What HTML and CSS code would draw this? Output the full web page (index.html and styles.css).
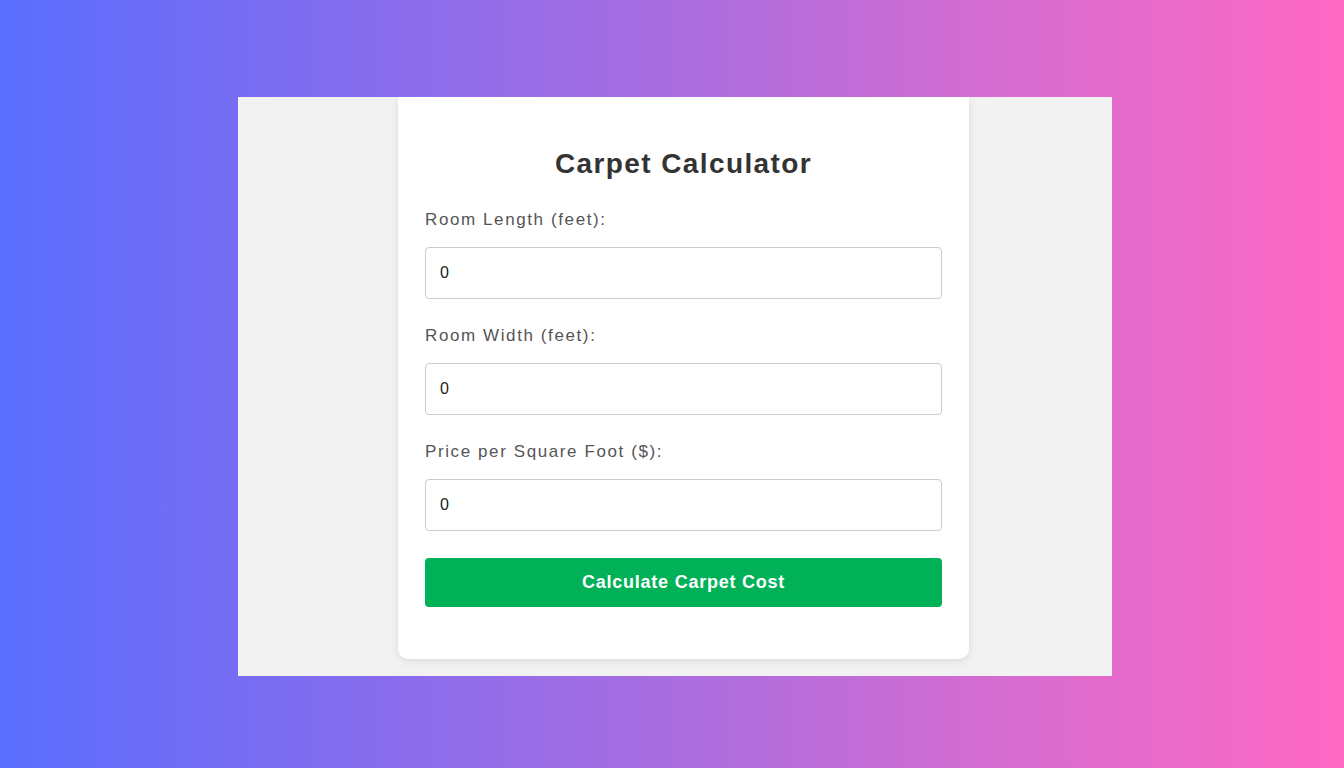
FILE: index.html
```html
<!DOCTYPE html>
<html lang="en">
<head>
<meta charset="utf-8">
<title>Carpet Calculator</title>
<link rel="stylesheet" href="styles.css">
</head>
<body>
<div class="stage">
  <div class="panel">
    <div class="card">
      <h1 class="title">Carpet Calculator</h1>
      <label class="label" for="len">Room Length (feet):</label>
      <input class="field" id="len" type="text" value="0">
      <label class="label" for="wid">Room Width (feet):</label>
      <input class="field" id="wid" type="text" value="0">
      <label class="label" for="price">Price per Square Foot ($):</label>
      <input class="field" id="price" type="text" value="0">
      <button class="btn" type="button">Calculate Carpet Cost</button>
    </div>
  </div>
</div>
</body>
</html>
```

FILE: styles.css
```css
* { box-sizing: border-box; }
html, body { margin: 0; padding: 0; }
body {
  width: 1344px;
  height: 768px;
  overflow: hidden;
  font-family: "Liberation Sans", Arial, sans-serif;
  background: linear-gradient(to right, #5a6eff 0%, #8a6cec 30%, #b26ddd 55%, #dc6ccf 78%, #ff68c3 100%);
}
.stage {
  padding-top: 97px;
  padding-left: 238px;
}
.panel {
  width: 874px;
  height: 579px;
  background: #f2f2f2;
  padding-left: 160px;
  overflow: hidden;
}
.card {
  width: 571px;
  height: 562px;
  background: #fff;
  border-radius: 0 0 10px 10px;
  box-shadow: 0 2px 8px rgba(0, 0, 0, 0.1);
  padding: 51px 27px 0 27px;
  display: flex;
  flex-direction: column;
}
.title {
  margin: 0 0 30px 0;
  font-size: 28px;
  line-height: 32px;
  font-weight: bold;
  letter-spacing: 1.4px;
  color: #333;
  text-align: center;
}
.label {
  display: block;
  font-size: 17px;
  line-height: 20px;
  letter-spacing: 1.6px;
  color: #555;
  margin-bottom: 17px;
}
.field {
  display: block;
  width: 100%;
  height: 52px;
  border: 1px solid #ccc;
  border-radius: 4px;
  padding: 0 14px;
  font-family: "Liberation Sans", Arial, sans-serif;
  font-size: 16px;
  color: #222;
  background: #fff;
  margin-bottom: 27px;
}
.btn {
  display: block;
  width: 100%;
  height: 49px;
  border: none;
  border-radius: 4px;
  background: #00b158;
  color: #fff;
  font-family: "Liberation Sans", Arial, sans-serif;
  font-size: 18px;
  font-weight: bold;
  letter-spacing: 0.75px;
}
```
